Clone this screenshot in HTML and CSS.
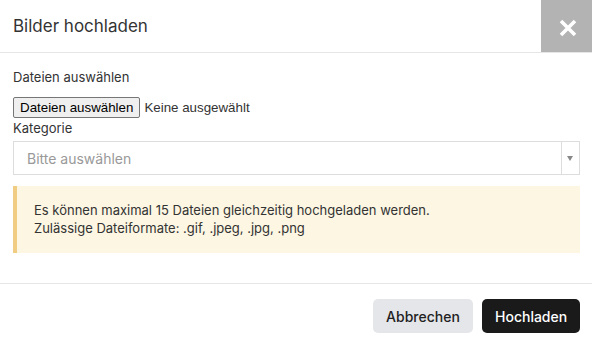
FILE: index.html
```html
<!DOCTYPE html>
<html lang="de">
<head>
    <meta charset="UTF-8">
    <meta name="viewport" content="width=device-width, initial-scale=1.0">
    <title>Bilder hochladen</title>
    <link rel="stylesheet" href="styles.css">
</head>
<body>
    <div class="modal">
        <div class="modal-header">
            <h2 class="modal-title">Bilder hochladen</h2>
            <button class="close-btn" aria-label="Schließen">
                <svg width="18" height="18" viewBox="0 0 18 18">
                    <path d="M2 2 L16 16 M16 2 L2 16" stroke="#fff" stroke-width="3.6" fill="none"/>
                </svg>
            </button>
        </div>

        <div class="modal-body">
            <label class="field-label">Dateien auswählen</label>
            <div class="file-row">
                <span class="file-btn">Dateien auswählen</span>
                <span class="file-status">Keine ausgewählt</span>
            </div>

            <label class="field-label small">Kategorie</label>
            <div class="select">
                <span class="select-placeholder">Bitte auswählen</span>
                <span class="select-arrow"></span>
            </div>

            <div class="alert">
                Es können maximal 15 Dateien gleichzeitig hochgeladen werden.<br>
                Zulässige Dateiformate: .gif, .jpeg, .jpg, .png
            </div>
        </div>

        <div class="modal-footer">
            <button class="btn btn-light">Abbrechen</button>
            <button class="btn btn-dark">Hochladen</button>
        </div>
    </div>
</body>
</html>
```

FILE: styles.css
```css
body {
    margin: 0;
    background-color: #fff;
    font-family: Inter, "Noto Sans", sans-serif;
    color: #333;
}

.modal {
    width: 592px;
}

.modal-header {
    display: flex;
    justify-content: space-between;
    align-items: stretch;
    height: 52px;
    border-bottom: 1px solid #e6e6e6;
}

.modal-title {
    margin: 0;
    padding-left: 13px;
    font-size: 17px;
    font-weight: 400;
    line-height: 52px;
    color: #333;
}

.close-btn {
    width: 51px;
    border: none;
    background-color: #b3b3b3;
    display: flex;
    align-items: center;
    justify-content: center;
    padding: 4px 0 0 3px;
    cursor: pointer;
}

.modal-body {
    padding: 15px 12px 0 13px;
}

.field-label {
    display: block;
    font-size: 13px;
    line-height: 18px;
    color: #333;
}

.file-row {
    display: flex;
    align-items: center;
    margin-top: 11px;
    font-family: "Liberation Sans", Arial, sans-serif;
    font-size: 13.33px;
}

.file-btn {
    box-sizing: border-box;
    height: 21px;
    line-height: 19px;
    padding: 0 6px;
    background-color: #efefef;
    border: 1px solid #767676;
    border-radius: 2px;
    color: #000;
}

.file-status {
    margin-left: 4px;
    color: #333;
}

.field-label.small {
    margin-top: 1px;
}

.select {
    display: flex;
    justify-content: space-between;
    align-items: center;
    box-sizing: border-box;
    height: 34px;
    margin-top: 4px;
    border: 1px solid #ddd;
}

.select-placeholder {
    padding-left: 13px;
    font-size: 14px;
    color: #999;
}

.select-arrow {
    position: relative;
    width: 17px;
    height: 32px;
    border-left: 1px solid #ddd;
}

.select-arrow::after {
    content: "";
    position: absolute;
    top: 14px;
    left: 5px;
    border-left: 3.5px solid transparent;
    border-right: 3.5px solid transparent;
    border-top: 5px solid #888;
}

.alert {
    margin-top: 11px;
    padding: 15px 16px 16px 17px;
    background-color: #fcf6e2;
    border-left: 4px solid #f0cd82;
    font-size: 13px;
    line-height: 18px;
    color: #333;
}

.modal-footer {
    display: flex;
    justify-content: flex-end;
    gap: 9px;
    margin-top: 30px;
    padding: 15px 12px 13px;
    border-top: 1px solid #e6e6e6;
}

.btn {
    height: 34px;
    padding: 0 13px;
    border: none;
    border-radius: 5px;
    font-family: Inter, "Noto Sans", sans-serif;
    font-size: 14px;
    font-weight: 500;
    cursor: pointer;
}

.btn-light {
    width: 100px;
    background-color: #e5e6e9;
    color: #222;
}

.btn-dark {
    width: 98px;
    background-color: #1a1a1a;
    color: #fff;
}
```
